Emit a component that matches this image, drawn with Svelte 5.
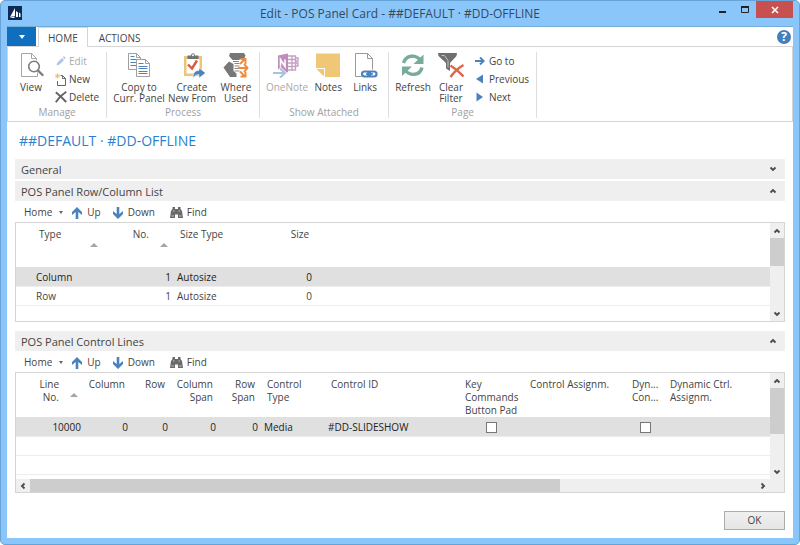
<script lang="ts">
	interface Command {
		label: string;
		icon: string;
		disabled?: boolean;
	}

	interface Group {
		title: string;
		large: Command[];
		small: Command[];
	}

	interface Column {
		label: string;
		width?: number;
		align?: 'right' | 'center';
		sorted?: boolean;
	}

	type Cell = string | boolean;

	const groups: Group[] = [
		{
			title: 'Manage',
			large: [{ label: 'View', icon: 'view' }],
			small: [
				{ label: 'Edit', icon: 'edit', disabled: true },
				{ label: 'New', icon: 'new' },
				{ label: 'Delete', icon: 'delete' }
			]
		},
		{
			title: 'Process',
			large: [
				{ label: 'Copy to\nCurr. Panel', icon: 'copy' },
				{ label: 'Create\nNew From', icon: 'create' },
				{ label: 'Where\nUsed', icon: 'where' }
			],
			small: []
		},
		{
			title: 'Show Attached',
			large: [
				{ label: 'OneNote', icon: 'onenote', disabled: true },
				{ label: 'Notes', icon: 'notes' },
				{ label: 'Links', icon: 'links' }
			],
			small: []
		},
		{
			title: 'Page',
			large: [
				{ label: 'Refresh', icon: 'refresh' },
				{ label: 'Clear\nFilter', icon: 'filter' }
			],
			small: [
				{ label: 'Go to', icon: 'goto' },
				{ label: 'Previous', icon: 'previous' },
				{ label: 'Next', icon: 'next' }
			]
		}
	];

	const panelColumns: Column[] = [
		{ label: '', width: 17 },
		{ label: 'Type', width: 71, sorted: true },
		{ label: 'No.', width: 70, align: 'right', sorted: true },
		{ label: 'Size Type', width: 71 },
		{ label: 'Size', width: 70, align: 'right' },
		{ label: '' }
	];
	const panelRows: Cell[][] = [
		['', 'Column', '1', 'Autosize', '0', ''],
		['', 'Row', '1', 'Autosize', '0', ''],
		['', '', '', '', '', '']
	];

	const lineColumns: Column[] = [
		{ label: 'Line\nNo.', width: 68, align: 'right', sorted: true },
		{ label: 'Column', width: 47, align: 'right' },
		{ label: 'Row', width: 40, align: 'right' },
		{ label: 'Column\nSpan', width: 48, align: 'right' },
		{ label: 'Row\nSpan', width: 42, align: 'right' },
		{ label: 'Control\nType', width: 64 },
		{ label: 'Control ID', width: 134 },
		{ label: 'Key\nCommands\nButton Pad', width: 65, align: 'center' },
		{ label: 'Control Assignm.', width: 102 },
		{ label: 'Dyn...\nCon...', width: 38, align: 'center' },
		{ label: 'Dynamic Ctrl.\nAssignm.' }
	];
	const lineRows: Cell[][] = [
		['10000', '0', '0', '0', '0', 'Media', '#DD-SLIDESHOW', false, '', false, ''],
		['', '', '', '', '', '', '', '', '', '', ''],
		['', '', '', '', '', '', '', '', '', '', '']
	];
</script>

{#snippet icon(name: string)}
	{#if name === 'view'}
		<svg width="26" height="25" viewBox="0 0 26 25" fill="none">
			<path d="M13.500 .5h-10v23h16v-4M13.500 .5l5 5M13.500 .5v5h5v2" stroke="#a6a6a6" />
			<circle cx="16" cy="13.500" r="5.300" fill="#fff" stroke="#7c7c7c" stroke-width="1.600" />
			<path d="M20 17.500l4.500 4.500" stroke="#7c7c7c" stroke-width="2.400" stroke-linecap="round" />
		</svg>
	{:else if name === 'edit'}
		<svg width="12" height="12" viewBox="0 0 12 12" fill="#a9c6e3">
			<path d="M1.500 10.500l1-3 4.500-4.500 2 2L4.500 9.500zM7.800 2.200l.9-.9q1 0 2 2l-.9.9z" />
		</svg>
	{:else if name === 'new'}
		<svg width="12" height="13" viewBox="0 0 12 13" fill="none">
			<path d="M5.500 2.500h2l3 3v7h-8V8M7.500 2.500v3h3" stroke="#666" />
			<path d="M2.500 .5v5M0 3h5M.8 1.300l3.400 3.400M4.200 1.300L.8 4.700" stroke="#ebb65f" stroke-width=".9" />
		</svg>
	{:else if name === 'delete'}
		<svg width="12" height="12" viewBox="0 0 12 12" fill="none" stroke="#636363">
			<path d="M.8 1.200C5 4.500 8 7.500 11.200 11M11.300 .8C7 3.500 3.500 7 .8 11.200" stroke-width="1.900" />
		</svg>
	{:else if name === 'copy'}
		<svg width="26" height="25" viewBox="0 0 26 25" fill="none">
			<path d="M2.500 .5h8l4 4v12h-12zM10.500 .5v4h4" fill="#fff" stroke="#a0a0a0" />
			<path d="M4.500 3.500h4M4.500 6.500h8M4.500 9.500h6M4.500 12.500h6" stroke="#4f84bb" />
			<path d="M10.500 6.500h9l4 4v13h-13zM19.500 6.500v4h4" fill="#fff" stroke="#a0a0a0" />
			<path d="M12.500 10.500h5M12.500 13.500h9M12.500 15.500h9M12.500 18.500h9M12.500 20.500h9" stroke="#4f84bb" />
		</svg>
	{:else if name === 'create'}
		<svg width="26" height="25" viewBox="0 0 26 25" fill="none">
			<path d="M5 3h18v20H5z" fill="#edc57a" />
			<path d="M7.500 6h13v14.500h-13z" fill="#fff" />
			<path d="M8.500 6V2.500H12c.5-3 3.500-3 4 0h3.500V6z" fill="#727272" />
			<circle cx="14" cy="2.300" r="1" fill="#fff" />
			<path d="M9 11.500l4 4 5-8" stroke="#d85c3d" stroke-width="2.400" />
			<path d="M14 25c0-5 2-7.500 6-7.500V15l6.500 5-6.500 5v-3.500c-3 0-4 1-6 3.500z" fill="#4b82bd" stroke="#fff" stroke-width=".5" />
		</svg>
	{:else if name === 'where'}
		<svg width="26" height="25" viewBox="0 0 26 25" fill="none">
			<path d="M7 0h14l1.500 2.500L21 6h-3.500l-1.500 1h-5L9.500 7 6 3z" fill="#777" />
			<path d="M6 8.500L10.500 11v7l3 2.500V24H7L.5 14.500z" fill="#777" />
			<path d="M10 8.500h6M11.500 10.500h5M11.500 13h5M11.500 15.500h5M11.500 18h5" stroke="#888" stroke-width="1.200" />
			<path d="M15 15h9M21 11l3.500 4-3.500 4M17 11l5-5M17.500 6h5v5M17 18.500l5 5M17.500 23.500h5V19" stroke="#ee8b3e" stroke-width="1.900" />
		</svg>
	{:else if name === 'onenote'}
		<svg width="26" height="25" viewBox="0 0 26 25" fill="none">
			<path d="M13 3h8.500v14H13M14 6.500h7M14 10h7M14 13.500h7M18 3v14M22 5h2v3h-2M22 10h2v3h-2" stroke="#c6a0c4" stroke-width="1.400" />
			<path d="M4 2.500L14 .5v19L4 17z" fill="#bd8dbb" />
			<path d="M6.500 13.500v-7l4.500 7v-7" stroke="#fff" stroke-width="1.600" />
			<path d="M-1 20h9M5 15.500l5 4.500-5 4.500" stroke="#fff" stroke-width="4.500" />
			<path d="M-1 20H10M6 15.500l5 4.500-5 4.500" stroke="#a7c3df" stroke-width="2.200" />
		</svg>
	{:else if name === 'notes'}
		<svg width="26" height="25" viewBox="0 0 26 25">
			<path d="M1 .5h24v23.500H10l-9-9z" fill="#efc777" />
			<path d="M1 15.500h8.500V24z" fill="#efc777" />
			<path d="M1 15.500h8.500V24" fill="none" stroke="#fff" />
		</svg>
	{:else if name === 'links'}
		<svg width="26" height="25" viewBox="0 0 26 25" fill="none">
			<path d="M15.500 .5h-12v23h6M15.500 .5l5 5v11M15.500 .5v5h5" stroke="#999" />
			<g stroke="#4b82bd" stroke-width="2.200">
				<rect x="10" y="18.500" width="8.500" height="5" rx="2.500" />
				<rect x="16" y="18.500" width="8.500" height="5" rx="2.500" />
			</g>
			<path d="M14 21h7" stroke="#4b82bd" stroke-width="1.500" />
		</svg>
	{:else if name === 'refresh'}
		<svg width="26" height="25" viewBox="0 0 26 25" fill="none" stroke="#79ac98">
			<path d="M3.500 10C6 1.500 16 1.500 20 7M22 14.500C20 23 10 23 5.500 17.500" stroke-width="3.400" />
			<path d="M23.500 1.500V11h-10zM2 23v-9.500h10z" fill="#79ac98" stroke="none" />
		</svg>
	{:else if name === 'filter'}
		<svg width="26" height="25" viewBox="0 0 26 25" fill="none">
			<path d="M0 0h19l-.5 3L12 10v8l-4-2.500V10L.5 3z" fill="#6f6f6f" />
			<path d="M3.500 2.500h3l3.500 5v7" stroke="#c4c4c4" />
			<path d="M12.500 12.500c5 3 9 6.500 13 11M25.500 12c-5 3-9.500 7-13 12" stroke="#dd6549" stroke-width="2.400" />
		</svg>
	{:else if name === 'goto'}
		<svg width="12" height="12" viewBox="0 0 12 12" fill="none" stroke="#4b82bd" stroke-width="1.800">
			<path d="M0 6h8M5 2.500L8.700 6 5 9.500" />
		</svg>
	{:else if name === 'previous'}
		<svg width="12" height="12" viewBox="0 0 12 12"><path d="M8 1.500v9L1 6z" fill="#4b82bd" /></svg>
	{:else if name === 'next'}
		<svg width="12" height="12" viewBox="0 0 12 12"><path d="M1.500 1.500v9L8 6z" fill="#4b82bd" /></svg>
	{:else if name === 'up'}
		<svg width="12" height="12" viewBox="0 0 12 12" fill="#4b82bd">
			<path d="M6 0l5 5v3L7.300 5v7H4.700V5L1 8V5z" />
		</svg>
	{:else if name === 'down'}
		<svg width="12" height="12" viewBox="0 0 12 12" fill="#4b82bd">
			<path d="M6 12L1 7V4l3.700 3V0h2.600v7L11 4v3z" />
		</svg>
	{:else if name === 'find'}
		<svg width="13" height="12" viewBox="0 0 13 12" fill="#6a6a6a">
			<path d="M2.500 0H5v2h3V0h2.500v2L12 4l1 7H8V7.500H5V11H0l1-7 1.500-2z" />
			<path d="M1.500 9h2.500M9 9h2.500M3 4h1.500M8.500 4H10" stroke="#fff" stroke-width=".6" />
		</svg>
	{/if}
{/snippet}

{#snippet chevron(dir: string)}
	<svg class="chevron {dir}" width="8" height="8" viewBox="0 0 8 8" fill="none">
		<path d="M1.500 5.500L4 3l2.500 2.500" stroke="#4c4c4c" stroke-width="1.900" />
	</svg>
{/snippet}

{#snippet largeButton(cmd: Command)}
	<button class="large" disabled={cmd.disabled}>
		{@render icon(cmd.icon)}
		<span>{cmd.label}</span>
	</button>
{/snippet}

{#snippet section(title: string, open: boolean)}
	<button class="section" aria-expanded={open}>
		<span>{title}</span>
		{@render chevron(open ? 'up' : 'down')}
	</button>
{/snippet}

{#snippet toolbar()}
	<div class="toolbar">
		<button class="menu">Home <i class="caret"></i></button>
		<button>{@render icon('up')}Up</button>
		<button>{@render icon('down')}Down</button>
		<button class="find">{@render icon('find')}Find</button>
	</div>
{/snippet}

{#snippet grid(columns: Column[], rows: Cell[][])}
	<table>
		<colgroup>
			{#each columns as col}
				<col style:width={col.width ? `${col.width}px` : null} />
			{/each}
		</colgroup>
		<thead>
			<tr>
				{#each columns as col}
					<th>
						<div class="head {col.align ?? ''}">
							<span>{col.label}</span>
							{#if col.sorted}<i class="sort"></i>{/if}
						</div>
					</th>
				{/each}
			</tr>
		</thead>
		<tbody>
			{#each rows as row, r}
				<tr class:selected={r === 0}>
					{#each row as cell, c}
						<td class={columns[c].align ?? ''}>
							{#if typeof cell === 'boolean'}
								<input type="checkbox" checked={cell} aria-label={columns[c].label} />
							{:else}
								{cell}
							{/if}
						</td>
					{/each}
				</tr>
			{/each}
		</tbody>
	</table>
{/snippet}

{#snippet vscroll(size: number)}
	<div class="vscroll">
		<button aria-label="Scroll up">{@render chevron('up')}</button>
		<div class="track"><div class="thumb" style:height={`${size}%`}></div></div>
		<button aria-label="Scroll down">{@render chevron('down')}</button>
	</div>
{/snippet}

<div class="window">
	<header class="titlebar">
		<svg class="logo" width="14" height="14" viewBox="0 0 14 14">
			<path d="M0 0h14v14H0z" fill="#0c2b55" />
			<path d="M2 11L7 2v8zM8 5l2 1.500V11H8zM11 6.500l1.500 1V11H11zM1.500 12l5-1.500V12z" fill="#fff" />
		</svg>
		<h1>Edit - POS Panel Card - ##DEFAULT · #DD-OFFLINE</h1>
		<div class="controls">
			<button aria-label="Minimize">
				<svg width="10" height="10" viewBox="0 0 10 10"><path d="M1 7h7v2H1z" fill="#222" /></svg>
			</button>
			<button aria-label="Maximize">
				<svg width="10" height="10" viewBox="0 0 10 10" fill="none" stroke="#222">
					<path d="M1.500 2.500h7v6h-7z" /><path d="M1 3h8" stroke-width="2" />
				</svg>
			</button>
			<button class="close" aria-label="Close">
				<svg width="8" height="8" viewBox="0 0 8 8"><path d="M1 1l6 6M7 1L1 7" stroke="#fff" stroke-width="1.600" /></svg>
			</button>
		</div>
	</header>

	<main>
		<nav class="tabs">
			<button class="file" aria-label="Application menu"><i></i></button>
			<button class="tab active">HOME</button>
			<button class="tab">ACTIONS</button>
			<button class="help" aria-label="Help">?</button>
		</nav>

		<div class="ribbon">
			{#each groups as group}
				<section class="group">
					<div class="commands">
						{#each group.large as cmd}
							{@render largeButton(cmd)}
						{/each}
						{#if group.small.length}
							<div class="stack">
								{#each group.small as cmd}
									<button class="small" disabled={cmd.disabled}>
										{@render icon(cmd.icon)}
										{cmd.label}
									</button>
								{/each}
							</div>
						{/if}
					</div>
					<div class="caption">{group.title}</div>
				</section>
			{/each}
		</div>

		<div class="content">
			<h2>##DEFAULT · #DD-OFFLINE</h2>

			{@render section('General', false)}
			{@render section('POS Panel Row/Column List', true)}
			{@render toolbar()}
			<div class="frame panel">
				<div class="body">
					<div class="view">{@render grid(panelColumns, panelRows)}</div>
					{@render vscroll(41)}
				</div>
			</div>

			{@render section('POS Panel Control Lines', true)}
			{@render toolbar()}
			<div class="frame">
				<div class="body lines">
					<div class="view">{@render grid(lineColumns, lineRows)}</div>
					{@render vscroll(60)}
				</div>
				<div class="hscroll">
					<button aria-label="Scroll left">{@render chevron('left')}</button>
					<div class="track"><div class="thumb" style:width="73%"></div></div>
					<button aria-label="Scroll right">{@render chevron('right')}</button>
				</div>
			</div>

			<footer><button class="ok">OK</button></footer>
		</div>
	</main>
</div>

<style>
	:global(body) {
		background: #fff;
	}
	.window {
		box-sizing: border-box;
		min-height: 100vh;
		display: flex;
		flex-direction: column;
		padding: 0 6px 6px;
		border: 1px solid #67a3d6;
		border-radius: 5px;
		background: #8bc6fa;
		color: #444;
		font: 10px/13px 'Open Sans', 'Noto Sans', sans-serif;
	}
	button {
		margin: 0;
		padding: 0;
		border: 0;
		background: none;
		color: inherit;
		font: inherit;
	}
	button:disabled {
		color: #aaa;
	}
	svg {
		display: block;
		flex: none;
	}
	h1,
	h2 {
		margin: 0;
		font-weight: 400;
	}

	.titlebar {
		display: grid;
		grid-template-columns: 1fr auto 1fr;
		height: 25px;
	}
	.logo {
		margin: 5px 1px;
	}
	h1 {
		color: #35495c;
		font-size: 12px;
		line-height: 25px;
	}
	.controls {
		display: flex;
		justify-content: flex-end;
		align-items: flex-start;
	}
	.controls button {
		display: flex;
		justify-content: center;
		padding: 3px 0;
		width: 22px;
	}
	.controls .close {
		align-items: center;
		box-sizing: border-box;
		width: 37px;
		height: 17px;
		background: #c75050;
	}

	main {
		flex: 1;
		display: flex;
		flex-direction: column;
		background: #fff;
		border-top: 1px solid #75add9;
	}
	.tabs {
		display: flex;
		height: 19px;
		border-bottom: 1px solid #d5d5d5;
	}
	.file {
		display: flex;
		align-items: center;
		justify-content: center;
		width: 29px;
		margin-right: 2px;
		background: #106ebe;
	}
	.file i {
		border: 3px solid transparent;
		border-top: 4px solid #fff;
		border-bottom: 0;
	}
	.tab {
		box-sizing: border-box;
		height: 20px;
		padding: 1px 9px 0;
		border: 1px solid transparent;
		margin-right: 1px;
		border-bottom: 0;
	}
	.tab.active {
		border-color: #d5d5d5;
		background: #fff;
	}
	.help {
		align-self: center;
		margin: 0 2px 0 auto;
		width: 14px;
		height: 14px;
		border-radius: 50%;
		background: #457fbb;
		color: #fff;
		font-weight: 700;
		font-size: 12px;
		line-height: 14px;
	}

	.ribbon {
		display: flex;
		padding: 5px 0 3px;
		border: 1px solid #d5d5d5;
		border-top: 0;
	}
	.group {
		padding: 0 5px;
		border-right: 1px solid #dedede;
	}
	.commands {
		display: flex;
		gap: 1px;
		height: 54px;
	}
	.large {
		display: flex;
		flex-direction: column;
		align-items: center;
		gap: 4px;
		min-width: 36px;
		padding: 1px 1px 0;
		line-height: 11px;
		white-space: pre-line;
	}
	.large:disabled svg {
		overflow: visible;
	}
	.stack {
		display: flex;
		flex-direction: column;
		margin-left: 4px;
	}
	.small {
		display: flex;
		align-items: center;
		gap: 2px;
		height: 18px;
		padding: 0 2px 0 1px;
	}
	.caption {
		color: #a0a0a0;
		text-align: center;
		line-height: 12px;
	}

	.content {
		flex: 1;
		display: flex;
		flex-direction: column;
		padding: 0 8px;
	}
	h2 {
		padding: 7px 4px 6px;
		color: #2b7fd0;
		font-size: 14px;
		line-height: 24px;
	}
	.section {
		display: flex;
		justify-content: space-between;
		align-items: center;
		height: 20px;
		margin-bottom: 2px;
		padding: 0 8px 0 6px;
		background: #efefef;
		font-size: 11px;
	}
	.toolbar {
		display: flex;
		height: 19px;
		padding-left: 9px;
	}
	.toolbar button {
		display: flex;
		align-items: center;
		gap: 4px;
		margin-right: 11px;
	}
	.toolbar .menu {
		gap: 7px;
		margin-right: 8px;
	}
	.toolbar .find {
		margin-left: 4px;
	}
	.caret {
		border: 2px solid transparent;
		border-top: 3px solid #666;
		border-bottom: 0;
	}

	.frame {
		border: 1px solid #d5d5d5;
	}
	.panel {
		margin-bottom: 9px;
	}
	.body {
		display: flex;
		height: 98px;
	}
	.lines {
		height: 106px;
	}
	.view {
		flex: 1;
		min-width: 0;
		overflow: hidden;
	}
	table {
		width: 100%;
		table-layout: fixed;
		border-collapse: collapse;
	}
	th {
		height: 44px;
		padding: 0;
		font-weight: 400;
		vertical-align: top;
		text-align: left;
	}
	.head {
		display: flex;
		padding: 5px 0 0 6px;
		white-space: pre;
	}
	.head.right {
		justify-content: flex-end;
		padding: 5px 6px 0 0;
		text-align: right;
	}
	.sort {
		margin: 15px 6px 0 auto;
		border: 4px solid transparent;
		border-bottom: 4px solid #a5a5a5;
		border-top: 0;
		align-self: flex-start;
	}
	.right .sort {
		margin: 15px 0 0 11px;
	}
	td {
		height: 17px;
		padding: 1px 3px 0;
		border-bottom: 1px solid #ededed;
		white-space: nowrap;
	}
	td.right {
		text-align: right;
	}
	td.center {
		text-align: center;
	}
	.selected td {
		height: 18px;
		background: #e0e0e0;
		color: #222;
	}
	input {
		appearance: none;
		display: block;
		box-sizing: border-box;
		width: 11px;
		height: 11px;
		margin: 0 auto;
		border: 1px solid #777;
		background: #fff;
	}

	.chevron.down {
		transform: rotate(180deg);
	}
	.chevron.left {
		transform: rotate(-90deg);
	}
	.chevron.right {
		transform: rotate(90deg);
	}
	.vscroll,
	.hscroll {
		display: flex;
		background: #efefef;
	}
	.vscroll {
		flex-direction: column;
		width: 14px;
	}
	.vscroll button,
	.hscroll button {
		display: flex;
		align-items: center;
		justify-content: center;
		width: 14px;
		height: 15px;
	}
	.hscroll {
		height: 13px;
		padding-right: 14px;
	}
	.hscroll button {
		height: 13px;
	}
	.track {
		flex: 1;
	}
	.thumb {
		height: 100%;
		background: #cdcdcd;
	}

	footer {
		margin-top: auto;
		padding: 8px 0;
		text-align: right;
	}
	.ok {
		width: 61px;
		height: 19px;
		border: 1px solid #acacac;
		background: linear-gradient(#f0f0f0, #e5e5e5);
	}
</style>
